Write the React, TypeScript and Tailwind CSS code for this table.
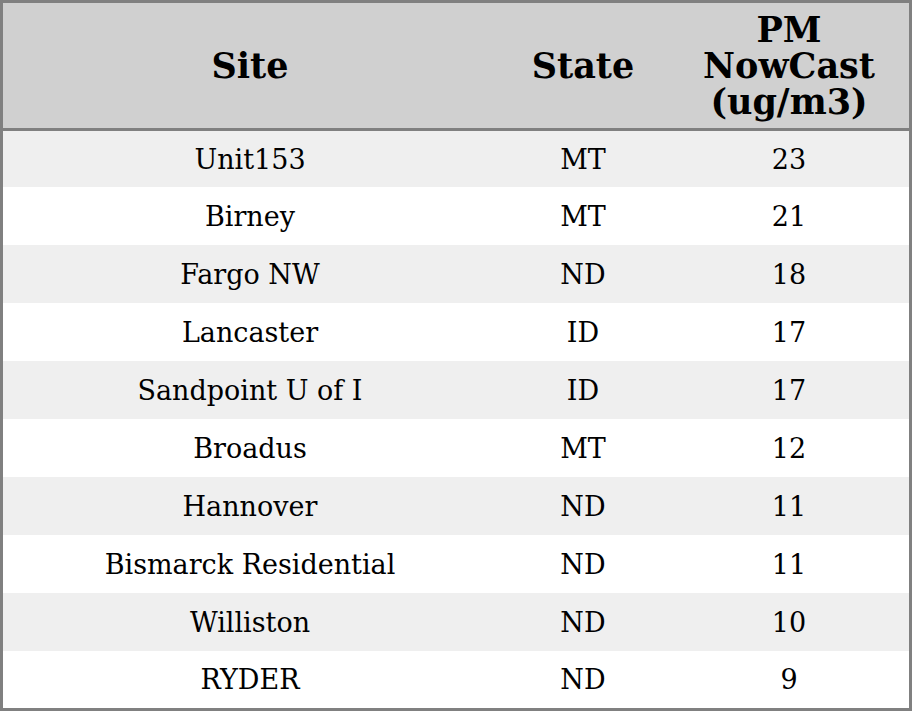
const rows: [string, string, number][] = [
  ['Unit153', 'MT', 23],
  ['Birney', 'MT', 21],
  ['Fargo NW', 'ND', 18],
  ['Lancaster', 'ID', 17],
  ['Sandpoint U of I', 'ID', 17],
  ['Broadus', 'MT', 12],
  ['Hannover', 'ND', 11],
  ['Bismarck Residential', 'ND', 11],
  ['Williston', 'ND', 10],
  ['RYDER', 'ND', 9],
];

const rowHeight = (i: number) => (i === 0 ? 'h-[56px]' : i === rows.length - 1 ? 'h-[57px]' : 'h-[58px]');

export default function App() {
  return (
    <div className="w-[912px] h-[711px] overflow-hidden bg-white font-['DejaVu_Serif',serif] text-black">
      <div className="border-[3px] border-[#808080]">
        <div className="grid grid-cols-[494px_172px_1fr] h-[128px] bg-[#d0d0d0] border-b-[3px] border-[#808080] text-[35px] leading-[36px] font-bold text-center items-center">
          <div>Site</div>
          <div>State</div>
          <div>
            PM
            <br />
            NowCast
            <br />
            (ug/m3)
          </div>
        </div>
        {rows.map(([site, state, pm], i) => (
          <div
            key={site}
            className={`grid grid-cols-[494px_172px_1fr] items-center text-center text-[27px] pt-[2px] ${rowHeight(i)} ${
              i % 2 === 0 ? 'bg-[#efefef]' : 'bg-white'
            }`}
          >
            <div>{site}</div>
            <div>{state}</div>
            <div>{pm}</div>
          </div>
        ))}
      </div>
    </div>
  );
}
